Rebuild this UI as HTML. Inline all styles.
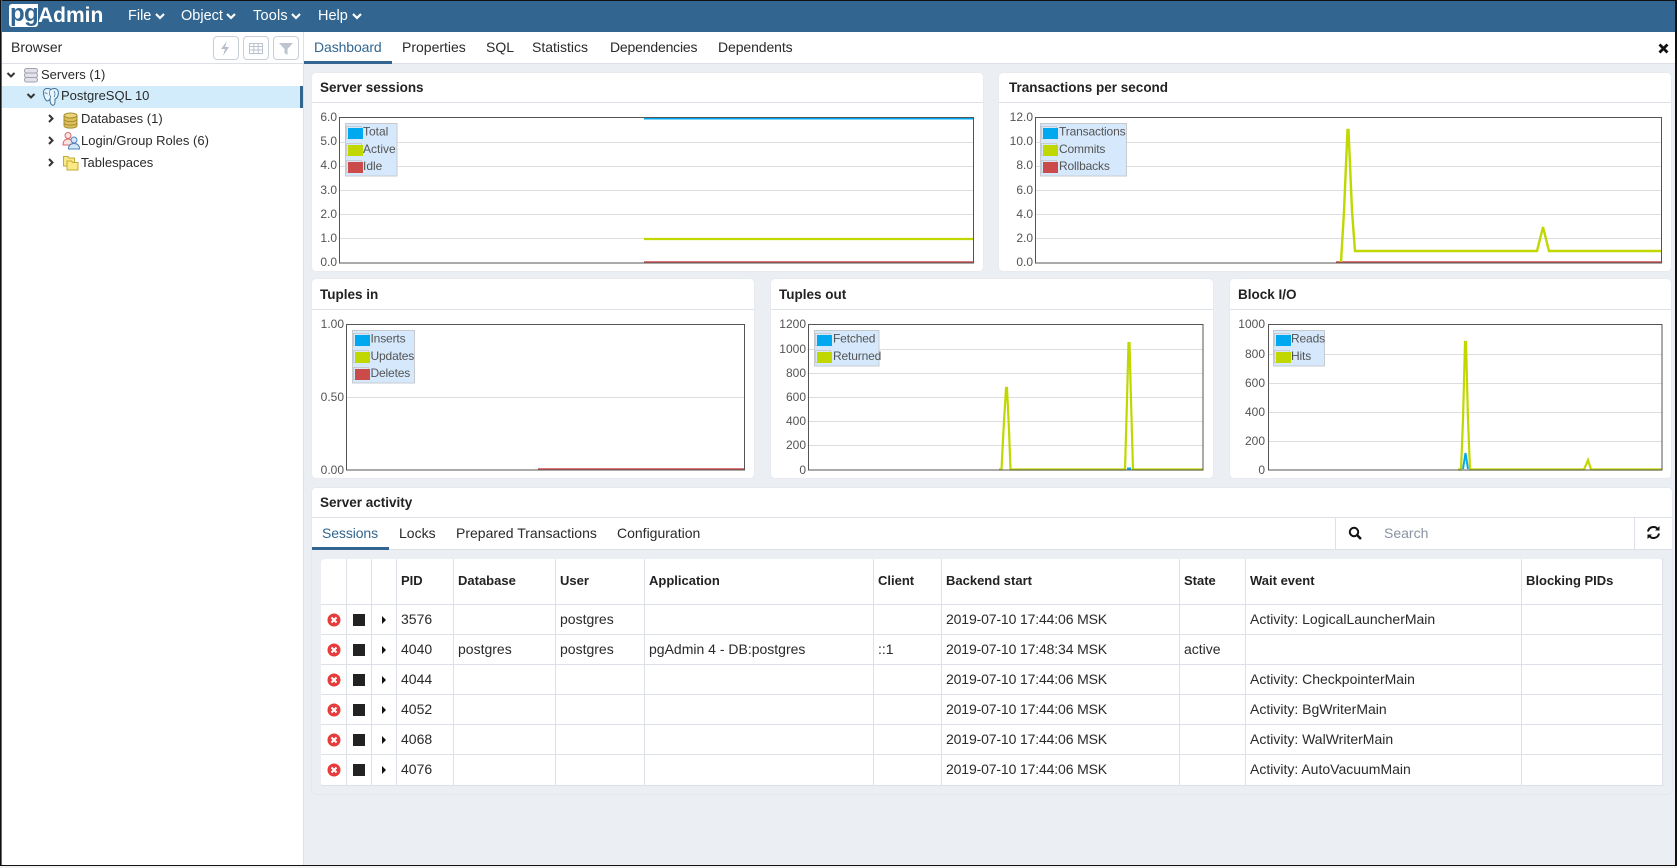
<!DOCTYPE html>
<html lang="en"><head><meta charset="utf-8"><title>pgAdmin 4</title>
<style>
html,body{margin:0;padding:0;width:1677px;height:868px;overflow:hidden;background:#f2f2f2;font-family:"Liberation Sans",Arial,sans-serif;color:#2a2a2a}
div,span,table,td,th{box-sizing:border-box}
.a{position:absolute}
.t{position:absolute;white-space:pre;line-height:20px;font-size:14px}
.s{font-size:13px}
.b{font-weight:bold;font-size:13.5px;color:#222}
.card{position:absolute;background:#fff;border-radius:4px;box-shadow:0 0 1px #d5d9e0}
.card i{position:absolute;left:0;right:0;height:1px;background:#dde0e6;display:block}
.btn{position:absolute;top:36px;width:26px;height:24px;border:1px solid #c8ced8;border-radius:4px;background:#fff}
#tb{position:absolute;left:321px;top:559px;width:1342px;border-collapse:separate;border-spacing:0;table-layout:fixed;background:#fff;font-size:14px;color:#2a2a2a;border-radius:4px}
#tb td,#tb th{border-right:1px solid #dde0e6;border-bottom:1px solid #dde0e6;padding:0 0 2px 4px;height:30px;text-align:left;white-space:nowrap;overflow:hidden}
#tb th{height:46px;font-size:13px;font-weight:bold;color:#222}
#tb td.ic{padding:0;line-height:0}
#tb td.ic svg{display:block;margin:auto}
#tb td.d{letter-spacing:-.14px}
#tb tr:last-child td{height:31px}
svg text{font-family:"Liberation Sans",Arial,sans-serif}
</style></head><body>

<!-- header -->
<div class="a" style="left:0;top:0;width:1677px;height:32px;background:#326690"></div>
<div class="a" style="left:9px;top:4px;width:29px;height:23px;background:#fff;border-radius:3px 0 3px 3px"></div>
<div class="t" style="left:10px;top:3px;font:bold 24px/22px 'Liberation Sans',sans-serif;color:#326690;letter-spacing:-.6px">pg</div>
<div class="t" style="left:38px;top:5px;font:bold 21px/22px 'Liberation Sans',sans-serif;color:#fff">Admin</div>
<div class="t" style="left:128px;top:6px;color:#fff;font-size:14.5px">File</div>
<div class="t" style="left:181px;top:6px;color:#fff;font-size:14.5px">Object</div>
<div class="t" style="left:253px;top:6px;color:#fff;font-size:14.5px;letter-spacing:.2px">Tools</div>
<div class="t" style="left:318px;top:6px;color:#fff;font-size:14.5px">Help</div>
<svg class="a" style="left:0;top:0" width="400" height="32" fill="none" stroke="#fff" stroke-width="2.2"><path d="M156 14l4 4 4-4M227 14l4 4 4-4M292 14l4 4 4-4M353 14l4 4 4-4"/></svg>

<!-- sidebar -->
<div class="a" style="left:0;top:32px;width:304px;height:834px;background:#fff;border-right:1px solid #dde0e6"></div>
<div class="a" style="left:0;top:63px;width:303px;height:1px;background:#dde0e6"></div>
<div class="t" style="left:11px;top:37px">Browser</div>
<div class="btn" style="left:213px"><svg width="24" height="22" fill="#b5bec9"><path d="M13 4l-6 8h4l-2 7 6-9h-4z"/></svg></div>
<div class="btn" style="left:243px"><svg width="24" height="22" fill="none" stroke="#b9c2ce"><path d="M5.5 6.500h13v10h-13zM5.500 9.500h13M5.500 13h13M9.800 6.500v10M14.200 6.500v10"/></svg></div>
<div class="btn" style="left:273px"><svg width="24" height="22" fill="#bcc4cf"><path d="M5 6h14l-5.500 6v6l-3-2v-4z"/></svg></div>

<div class="a" style="left:2px;top:86px;width:298px;height:22px;background:#d3ecfb"></div>
<div class="a" style="left:300px;top:86px;width:3px;height:22px;background:#326690"></div>
<div class="t s" style="left:41px;top:65px">Servers (1)</div>
<div class="t s" style="left:61px;top:86px">PostgreSQL 10</div>
<div class="t s" style="left:81px;top:109px">Databases (1)</div>
<div class="t s" style="left:81px;top:131px">Login/Group Roles (6)</div>
<div class="t s" style="left:81px;top:153px">Tablespaces</div>
<svg class="a" style="left:0;top:60px" width="100" height="120">
 <g fill="none" stroke="#333" stroke-width="2"><path d="M7.500 13l3.500 3.500L14.500 13M27.500 34l3.500 3.500L34.500 34M49 55l3.500 3.500L49 62M49 77l3.500 3.500L49 84M49 99l3.500 3.500L49 106"/></g>
 <g fill="#e2e2ea" stroke="#a2a2b0"><rect x="24.500" y="8.500" width="13" height="4.500" rx="2"/><rect x="24.500" y="13" width="13" height="4.500" rx="2"/><rect x="24.500" y="17.500" width="13" height="4.500" rx="2"/></g>
 <path d="M47 28.500c-3 0-4 3-3.500 5.500.5 3 2 7 4 7 1 0 1.500-1 2.500-2 0 2 0 5 2 6 2 .8 3-1 3-3v-3c2-.5 3-3 3.300-5 .5-3-1-5.500-4-5.500-1.500 0-2.500.5-3.300 1-1-1-2.500-1-4-1z" fill="#e8f4fc" stroke="#3f7199"/><path d="M51 29c-2 2-2 5-.5 7.500 0 1.500-.5 2.500-.5 2.500M54 31c1.500 2 1 4.500 0 6M44.500 33c1-.5 2 0 3 1" fill="none" stroke="#3f7199" stroke-width=".8"/>
 <g fill="#dcc05a" stroke="#a68d30"><path d="M64 62.500v3c0 3.500 13 3.500 13 0v-3"/><path d="M64 59v3.500c0 3.500 13 3.500 13 0V59"/><path d="M64 55.500v3.500c0 3.500 13 3.500 13 0v-3.500"/><ellipse cx="70.500" cy="55.500" rx="6.500" ry="2.500" fill="#ead37c"/></g>
 <g fill="#fbe3e3" stroke="#d8686c"><circle cx="68" cy="75.500" r="3"/><path d="M63 85c0-4 2-6 5-6s5 2 5 6z"/></g>
 <g fill="#d6e6f7" stroke="#4d82bf"><circle cx="74" cy="80" r="3"/><path d="M68.500 89c0-4 2-5.500 5.500-5.500s5.500 1.500 5.500 5.500z"/></g>
 <g fill="#f7e88a" stroke="#c3aa35"><path d="M63.500 96.500h4.500l1 1.500h5.500v8h-11z"/><path d="M67 101h4.500l1 1.500h5.500v7.500H67z" fill="#fbe985"/></g>
</svg>

<!-- main -->
<div class="a" style="left:304px;top:32px;width:1371px;height:833px;background:#ebeef3"></div>
<div class="a" style="left:304px;top:32px;width:1371px;height:32px;background:#fff;border-bottom:1px solid #dde0e6"></div>
<div class="a" style="left:304px;top:61px;width:88px;height:3px;background:#326690"></div>
<div class="t" style="left:314px;top:37px;color:#326690;letter-spacing:-.1px">Dashboard</div>
<div class="t" style="left:402px;top:37px">Properties</div>
<div class="t" style="left:486px;top:37px">SQL</div>
<div class="t" style="left:532px;top:37px">Statistics</div>
<div class="t" style="left:610px;top:37px;letter-spacing:-.18px">Dependencies</div>
<div class="t" style="left:718px;top:37px;letter-spacing:-.1px">Dependents</div>
<svg class="a" style="left:1657px;top:42px" width="14" height="14"><path d="M2.500 2.500l8 8m0-8l-8 8" stroke="#111" stroke-width="2.800" fill="none"/></svg>

<!-- cards -->
<div class="card" style="left:312px;top:73px;width:671px;height:198px"><i style="top:29px"></i></div>
<div class="card" style="left:999px;top:73px;width:672px;height:198px"><i style="top:29px"></i></div>
<div class="card" style="left:312px;top:279px;width:442px;height:199px"><i style="top:30px"></i></div>
<div class="card" style="left:771px;top:279px;width:442px;height:199px"><i style="top:30px"></i></div>
<div class="card" style="left:1230px;top:279px;width:441px;height:199px"><i style="top:30px"></i></div>
<div class="t b" style="left:320px;top:78px">Server sessions</div>
<div class="t b" style="left:1009px;top:78px">Transactions per second</div>
<div class="t b" style="left:320px;top:285px">Tuples in</div>
<div class="t b" style="left:779px;top:285px">Tuples out</div>
<div class="t b" style="left:1238px;top:285px">Block I/O</div>

<!-- charts -->
<svg class="a" style="left:0;top:0" width="1677" height="868" font-size="12" fill="#545454">
 <!-- Server sessions -->
 <g stroke="#dddddd" fill="none"><path d="M339 142.500h635M339 166.500h635M339 190.500h635M339 214.500h635M339 238.500h635"/></g>
 <g text-anchor="end"><text x="337" y="121">6.0</text><text x="337" y="145">5.0</text><text x="337" y="169">4.0</text><text x="337" y="194">3.0</text><text x="337" y="218">2.0</text><text x="337" y="242">1.0</text><text x="337" y="266">0.0</text></g>
 <path d="M644 118.500H974" stroke="#00a8f0" stroke-width="2"/><path d="M644 239H974" stroke="#c0d800" stroke-width="2.200"/><path d="M644 262H974" stroke="#cb4b4b" stroke-width="1.500"/>
 <rect x="339.500" y="117.500" width="634" height="145.500" fill="none" stroke="#545454"/>
 <rect x="345.500" y="123.500" width="51.500" height="52.500" fill="#d6e9fc" stroke="#c6cacf"/>
 <g fill="none" stroke="#c8ccd0"><rect x="346.500" y="126.500" width="15" height="12"/><rect x="346.500" y="143.500" width="15" height="12"/><rect x="346.500" y="160.500" width="15" height="12"/></g>
 <rect x="348" y="128" width="15" height="11" fill="#00a8f0"/><rect x="348" y="145" width="15" height="11" fill="#c0d800"/><rect x="348" y="162" width="15" height="11" fill="#cb4b4b"/>
 <text x="363" y="135.500">Total</text><text x="363" y="153">Active</text><text x="363" y="170">Idle</text>

 <!-- Transactions -->
 <g stroke="#dddddd" fill="none"><path d="M1035 142.500h626M1035 166.500h626M1035 190.500h626M1035 214.500h626M1035 238.500h626"/></g>
 <g text-anchor="end"><text x="1033" y="121">12.0</text><text x="1033" y="145">10.0</text><text x="1033" y="169">8.0</text><text x="1033" y="194">6.0</text><text x="1033" y="218">4.0</text><text x="1033" y="242">2.0</text><text x="1033" y="266">0.0</text></g>
 <path d="M1336 262H1661" stroke="#cb4b4b" stroke-width="1.500"/>
 <path d="M1341 262L1344 211 1347.500 130 1348.500 130 1352 211 1355 251H1537L1543 227 1549 251H1661" fill="none" stroke="#c0d800" stroke-width="2.400"/>
 <rect x="1035.500" y="117.500" width="626" height="145.500" fill="none" stroke="#545454"/>
 <rect x="1040.500" y="123.500" width="86" height="52.500" fill="#d6e9fc" stroke="#c6cacf"/>
 <g fill="none" stroke="#c8ccd0"><rect x="1041.500" y="126.500" width="15" height="12"/><rect x="1041.500" y="143.500" width="15" height="12"/><rect x="1041.500" y="160.500" width="15" height="12"/></g>
 <rect x="1043" y="128" width="15" height="11" fill="#00a8f0"/><rect x="1043" y="145" width="15" height="11" fill="#c0d800"/><rect x="1043" y="162" width="15" height="11" fill="#cb4b4b"/>
 <text x="1059" y="135.500" letter-spacing="-.15">Transactions</text><text x="1059" y="153" letter-spacing="-.15">Commits</text><text x="1059" y="170" letter-spacing="-.15">Rollbacks</text>

 <!-- Tuples in -->
 <path d="M346 397.500h399" stroke="#dddddd"/>
 <g text-anchor="end"><text x="344" y="328">1.00</text><text x="344" y="401">0.50</text><text x="344" y="474">0.00</text></g>
 <path d="M538 469H745" stroke="#cb4b4b" stroke-width="1.500"/>
 <rect x="346.500" y="324.500" width="398" height="145.500" fill="none" stroke="#545454"/>
 <rect x="352.500" y="330.500" width="62" height="52.500" fill="#d6e9fc" stroke="#c6cacf"/>
 <g fill="none" stroke="#c8ccd0"><rect x="353.500" y="333.500" width="15" height="12"/><rect x="353.500" y="350.500" width="15" height="12"/><rect x="353.500" y="367.500" width="15" height="12"/></g>
 <rect x="355" y="335" width="15" height="11" fill="#00a8f0"/><rect x="355" y="352" width="15" height="11" fill="#c0d800"/><rect x="355" y="369" width="15" height="11" fill="#cb4b4b"/>
 <text x="370.500" y="342.500" letter-spacing="-.15">Inserts</text><text x="370.500" y="360" letter-spacing="-.15">Updates</text><text x="370.500" y="377" letter-spacing="-.15">Deletes</text>

 <!-- Tuples out -->
 <g stroke="#dddddd" fill="none"><path d="M809 349.500h394M809 373.500h394M809 397.500h394M809 421.500h394M809 445.500h394"/></g>
 <g text-anchor="end"><text x="806" y="328">1200</text><text x="806" y="353">1000</text><text x="806" y="377">800</text><text x="806" y="401">600</text><text x="806" y="425">400</text><text x="806" y="449">200</text><text x="806" y="474">0</text></g>
 <path d="M1127 469h4" stroke="#00a8f0" stroke-width="3"/>
 <path d="M999 469.500H1001.500L1003.500 430 1006 388 1007 388 1009 430 1010.500 469.500H1125L1127 400 1128.500 343 1129.500 343 1131 400 1133 469.500H1203" fill="none" stroke="#c0d800" stroke-width="2.200"/>
 <rect x="808.500" y="324.500" width="394.500" height="145.500" fill="none" stroke="#545454"/>
 <rect x="814.500" y="330.500" width="64.500" height="35.500" fill="#d6e9fc" stroke="#c6cacf"/>
 <g fill="none" stroke="#c8ccd0"><rect x="815.500" y="333.500" width="15" height="12"/><rect x="815.500" y="350.500" width="15" height="12"/></g>
 <rect x="817" y="335" width="15" height="11" fill="#00a8f0"/><rect x="817" y="352" width="15" height="11" fill="#c0d800"/>
 <text x="833" y="342.500" letter-spacing="-.15">Fetched</text><text x="833" y="360" letter-spacing="-.15">Returned</text>

 <!-- Block IO -->
 <g stroke="#dddddd" fill="none"><path d="M1268 354.500h394M1268 383.500h394M1268 412.500h394M1268 441.500h394"/></g>
 <g text-anchor="end"><text x="1265" y="328">1000</text><text x="1265" y="358">800</text><text x="1265" y="387">600</text><text x="1265" y="416">400</text><text x="1265" y="445">200</text><text x="1265" y="474">0</text></g>
 <path d="M1463 469L1465.500 453 1468 469" fill="none" stroke="#00a8f0" stroke-width="2"/>
 <path d="M1458 469.500H1461L1463 420 1465 342 1466 342 1468 420 1470 469.500H1584L1588 460 1591 469.500H1662" fill="none" stroke="#c0d800" stroke-width="2.200"/>
 <rect x="1268.500" y="324.500" width="393.500" height="145.500" fill="none" stroke="#545454"/>
 <rect x="1273.500" y="330.500" width="51" height="35.500" fill="#d6e9fc" stroke="#c6cacf"/>
 <g fill="none" stroke="#c8ccd0"><rect x="1274.500" y="333.500" width="15" height="12"/><rect x="1274.500" y="350.500" width="15" height="12"/></g>
 <rect x="1276" y="335" width="15" height="11" fill="#00a8f0"/><rect x="1276" y="352" width="15" height="11" fill="#c0d800"/>
 <text x="1291" y="342.500" letter-spacing="-.15">Reads</text><text x="1291" y="360" letter-spacing="-.15">Hits</text>
</svg>

<!-- server activity -->
<div class="card" style="left:312px;top:488px;width:1360px;height:306px;background:#ebeef3;box-shadow:0 0 1px #c9ced6"></div>
<div class="a" style="left:312px;top:488px;width:1360px;height:62px;background:#fff;border-radius:4px 4px 0 0;border-bottom:1px solid #dde0e6"></div>
<div class="a" style="left:312px;top:517px;width:1360px;height:1px;background:#dde0e6"></div>
<div class="a" style="left:312px;top:547px;width:77px;height:3px;background:#326690"></div>
<div class="t b" style="left:320px;top:493px">Server activity</div>
<div class="t" style="left:322px;top:523px;color:#326690;letter-spacing:-.1px">Sessions</div>
<div class="t" style="left:399px;top:523px">Locks</div>
<div class="t" style="left:456px;top:523px">Prepared Transactions</div>
<div class="t" style="left:617px;top:523px">Configuration</div>
<div class="a" style="left:1335px;top:518px;width:1px;height:31px;background:#dde0e6"></div>
<div class="a" style="left:1634px;top:518px;width:1px;height:31px;background:#dde0e6"></div>
<div class="t" style="left:1384px;top:523px;color:#8a93a0">Search</div>
<svg class="a" style="left:1348px;top:526px" width="14" height="14" fill="none" stroke="#111"><circle cx="6" cy="6" r="4.200" stroke-width="2"/><path d="M9 9l4 4" stroke-width="2.400"/></svg>
<svg class="a" style="left:1646px;top:525px" width="15" height="15" fill="none" stroke="#111" stroke-width="2"><path d="M2 6.500a5.500 5.500 0 0 1 10-2"/><path d="M13 8.500a5.500 5.500 0 0 1-10 2"/><path d="M13.500 1v4.500H9z M1.500 14V9.500H6z" fill="#111" stroke="none"/></svg>

<table id="tb">
<colgroup><col style="width:26px"><col style="width:25px"><col style="width:25px"><col style="width:57px"><col style="width:102px"><col style="width:89px"><col style="width:229px"><col style="width:68px"><col style="width:238px"><col style="width:66px"><col style="width:276px"><col style="width:141px"></colgroup>
<tr><th></th><th></th><th></th><th>PID</th><th>Database</th><th>User</th><th>Application</th><th>Client</th><th>Backend start</th><th>State</th><th>Wait event</th><th>Blocking PIDs</th></tr>
<tr><td class="ic"><svg width="14" height="14"><circle cx="7" cy="7" r="6.500" fill="#e63b3b"/><path d="M4.500 4.500l5 5m0-5l-5 5" stroke="#fff" stroke-width="2"/></svg></td><td class="ic"><svg width="12" height="12"><rect width="12" height="12" fill="#222"/></svg></td><td class="ic"><svg width="6" height="10"><path d="M1 1l4 4-4 4z" fill="#111"/></svg></td><td>3576</td><td></td><td>postgres</td><td></td><td></td><td class="d">2019-07-10 17:44:06 MSK</td><td></td><td>Activity: LogicalLauncherMain</td><td></td></tr>
<tr><td class="ic"><svg width="14" height="14"><circle cx="7" cy="7" r="6.500" fill="#e63b3b"/><path d="M4.500 4.500l5 5m0-5l-5 5" stroke="#fff" stroke-width="2"/></svg></td><td class="ic"><svg width="12" height="12"><rect width="12" height="12" fill="#222"/></svg></td><td class="ic"><svg width="6" height="10"><path d="M1 1l4 4-4 4z" fill="#111"/></svg></td><td>4040</td><td>postgres</td><td>postgres</td><td>pgAdmin 4 - DB:postgres</td><td>::1</td><td class="d">2019-07-10 17:48:34 MSK</td><td>active</td><td></td><td></td></tr>
<tr><td class="ic"><svg width="14" height="14"><circle cx="7" cy="7" r="6.500" fill="#e63b3b"/><path d="M4.500 4.500l5 5m0-5l-5 5" stroke="#fff" stroke-width="2"/></svg></td><td class="ic"><svg width="12" height="12"><rect width="12" height="12" fill="#222"/></svg></td><td class="ic"><svg width="6" height="10"><path d="M1 1l4 4-4 4z" fill="#111"/></svg></td><td>4044</td><td></td><td></td><td></td><td></td><td class="d">2019-07-10 17:44:06 MSK</td><td></td><td>Activity: CheckpointerMain</td><td></td></tr>
<tr><td class="ic"><svg width="14" height="14"><circle cx="7" cy="7" r="6.500" fill="#e63b3b"/><path d="M4.500 4.500l5 5m0-5l-5 5" stroke="#fff" stroke-width="2"/></svg></td><td class="ic"><svg width="12" height="12"><rect width="12" height="12" fill="#222"/></svg></td><td class="ic"><svg width="6" height="10"><path d="M1 1l4 4-4 4z" fill="#111"/></svg></td><td>4052</td><td></td><td></td><td></td><td></td><td class="d">2019-07-10 17:44:06 MSK</td><td></td><td>Activity: BgWriterMain</td><td></td></tr>
<tr><td class="ic"><svg width="14" height="14"><circle cx="7" cy="7" r="6.500" fill="#e63b3b"/><path d="M4.500 4.500l5 5m0-5l-5 5" stroke="#fff" stroke-width="2"/></svg></td><td class="ic"><svg width="12" height="12"><rect width="12" height="12" fill="#222"/></svg></td><td class="ic"><svg width="6" height="10"><path d="M1 1l4 4-4 4z" fill="#111"/></svg></td><td>4068</td><td></td><td></td><td></td><td></td><td class="d">2019-07-10 17:44:06 MSK</td><td></td><td>Activity: WalWriterMain</td><td></td></tr>
<tr><td class="ic"><svg width="14" height="14"><circle cx="7" cy="7" r="6.500" fill="#e63b3b"/><path d="M4.500 4.500l5 5m0-5l-5 5" stroke="#fff" stroke-width="2"/></svg></td><td class="ic"><svg width="12" height="12"><rect width="12" height="12" fill="#222"/></svg></td><td class="ic"><svg width="6" height="10"><path d="M1 1l4 4-4 4z" fill="#111"/></svg></td><td>4076</td><td></td><td></td><td></td><td></td><td class="d">2019-07-10 17:44:06 MSK</td><td></td><td>Activity: AutoVacuumMain</td><td></td></tr>
</table>

<!-- window frame -->
<div class="a" style="left:0;top:0;width:1677px;height:1px;background:#111"></div>
<div class="a" style="left:0;top:0;width:1px;height:866px;background:#111"></div>
<div class="a" style="left:1px;top:0;width:1px;height:866px;background:#666"></div>
<div class="a" style="left:1675px;top:0;width:2px;height:866px;background:#111"></div>
<div class="a" style="left:0;top:865px;width:1677px;height:1px;background:#111"></div>
</body></html>
